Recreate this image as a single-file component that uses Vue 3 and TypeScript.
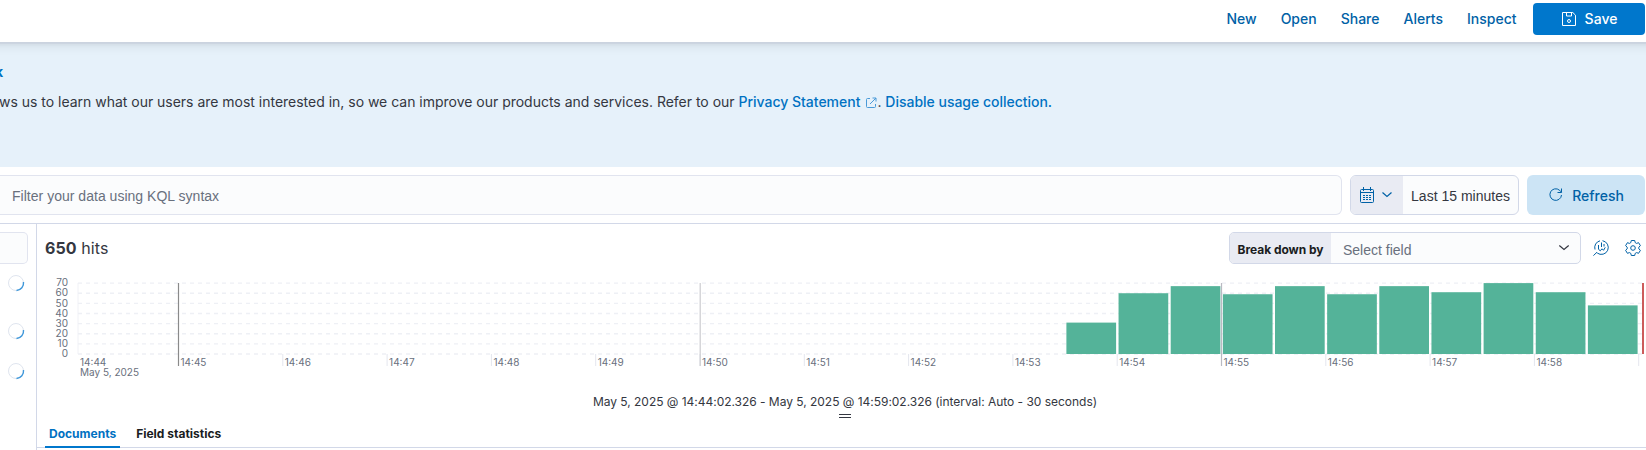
<script setup lang="ts">
const menu = ['New', 'Open', 'Share', 'Alerts', 'Inspect']
const yTicks = [70, 60, 50, 40, 30, 20, 10, 0]
const minuteWidth = 104.3
const firstMinute = 178.5
const minutes = Array.from({ length: 15 }, (_, i) => ({
  x: firstMinute + i * minuteWidth,
  label: i < 14 ? `14:${45 + i}` : '',
}))
const counts = [31, 60, 67, 59, 67, 59, 67, 61, 70, 61, 48]
const baseY = 354
const unit = 70.9 / 70
const yOf = (v: number) => baseY - v * unit
const bars = counts.map((v, i) => ({
  x: 1066.4 + i * 52.15,
  y: yOf(v),
  h: v * unit,
}))
const loaders = ['Selected', 'Available', 'Meta']
</script>

<template>
  <div class="page">
    <header class="header">
      <nav class="menu">
        <a v-for="m in menu" :key="m">{{ m }}</a>
      </nav>
      <button class="save">
        <svg width="16" height="16" viewBox="0 0 16 16" fill="none" stroke="currentColor">
          <path d="M1.500 1.500h10.300l2.700 2.700v10.300h-13zM5.500 1.500v3.500h5v-3.500" />
          <circle cx="8" cy="10" r="1.500" />
        </svg>
        <span>Save</span>
      </button>
    </header>

    <section class="banner">
      <div class="banner-title"><span>k</span></div>
      <p class="banner-text">
        <span>ws us to learn what our users are most interested in, so we can improve our products and services. Refer to our&nbsp;</span>
        <a>Privacy Statement</a>
        <svg class="popout" width="12" height="12" viewBox="0 0 12 12" fill="none" stroke="currentColor">
          <path d="M5 1.500H2.500a1 1 0 0 0-1 1v7a1 1 0 0 0 1 1h7a1 1 0 0 0 1-1V7M7.500 1h3.500v3.500M11 1L5 7" />
        </svg>
        <span>.&nbsp;</span>
        <a>Disable usage collection.</a>
      </p>
    </section>

    <section class="query">
      <div class="kql">Filter your data using KQL syntax</div>
      <div class="dates">
        <div class="quick">
          <svg width="16" height="16" viewBox="0 0 16 16" fill="none" stroke="currentColor">
            <rect x="1.500" y="2.500" width="13" height="13" rx="1" />
            <path d="M1.500 5.500h13M4.500 0v4M11.500 0v4" />
            <path d="M4 8.500h8.500M4 10.500h8.500M4 12.500h8.500" stroke-dasharray="2 1" />
          </svg>
          <svg width="12" height="16" viewBox="0 0 12 16" fill="none" stroke="currentColor" stroke-width="1.200">
            <path d="M1.500 5.500L6 9.500l4.500-4" />
          </svg>
        </div>
        <div class="range">Last 15 minutes</div>
      </div>
      <button class="refresh">
        <svg width="16" height="16" viewBox="0 0 16 16" fill="none" stroke="currentColor">
          <path d="M13.500 8a5.800 5.800 0 1 1-2-4.800l2 2M13.500 1.500v4H9.500" />
        </svg>
        <span>Refresh</span>
      </button>
    </section>

    <main class="body">
      <aside class="sidebar">
        <div class="search"></div>
        <svg v-for="l in loaders" :key="l" class="loader" :class="l.toLowerCase()" width="18" height="18" viewBox="0 0 18 18" fill="none">
          <circle cx="9" cy="9" r="7.500" stroke="#dfe5ef" />
          <path d="M16.500 8a7.500 7.500 0 0 1-7 8.500" stroke="#3f98da" stroke-width="1.400" />
        </svg>
      </aside>

      <div class="content">
        <div class="toolbar">
          <div class="hits"><strong>650</strong> hits</div>
          <div class="breakdown">
            <label>Break down by</label>
            <div class="select">
              <span>Select field</span>
              <svg width="12" height="16" viewBox="0 0 12 16" fill="none" stroke="currentColor" stroke-width="1.200">
                <path d="M1.300 5.500L6 9.500l4.700-4" />
              </svg>
            </div>
          </div>
          <svg class="tool" width="16" height="16" viewBox="0 0 16 16" fill="none" stroke="currentColor">
            <path d="M2 9.500A6.900 6.900 0 0 1 7 .8M9.500 .7A6.900 6.900 0 1 1 4.200 13M.4 15.600l3.600-3.400" />
            <path d="M5.500 5v4.300l1.800 1.500 1.700-2 1.500 1.500 1.800-3M8.500 2.500v4.500M11 4v2.500" />
          </svg>
          <svg class="tool gear" width="16" height="16" viewBox="0 0 16 16" fill="none" stroke="currentColor">
            <path d="M6.300.5h3.400l.5 2.100 1.300.8 2.100-.7 1.800 3-1.600 1.500v1.600l1.600 1.500-1.800 3-2.100-.7-1.300.8-.5 2.100H6.300l-.5-2.100-1.300-.8-2.100.7-1.800-3 1.600-1.500V7.200L.6 5.700l1.800-3 2.100.7 1.300-.8z" stroke-linejoin="round" />
            <circle cx="8" cy="8" r="2.300" />
          </svg>
        </div>

        <svg class="chart" width="1609" height="120" viewBox="37 265 1609 120">
          <line class="axis" x1="78" x2="78" y1="283" y2="354" />
          <line v-for="v in yTicks" :key="v" class="grid" x1="78" x2="1643" :y1="yOf(v)" :y2="yOf(v)" />
          <text v-for="v in yTicks" :key="'l' + v" class="tick-label" text-anchor="end" x="68" :y="yOf(v) + 3.200">{{ v }}</text>
          <line v-for="m in minutes" :key="m.x" class="tick" :x1="m.x" :x2="m.x" y1="354" y2="366" />
          <rect v-for="b in bars" :key="b.x" class="bar" :x="b.x" :y="b.y" width="49.700" :height="b.h" />
          <line class="major dark" x1="178.500" x2="178.500" y1="283" y2="366" />
          <line class="major light" x1="700.200" x2="700.200" y1="283" y2="366" />
          <line class="major" x1="1221.500" x2="1221.500" y1="283" y2="366" />
          <rect class="now" x="1642" y="283" width="2" height="71" />
          <text class="tick-label" x="80" y="366">14:44</text>
          <text class="tick-label" x="80" y="376">May 5, 2025</text>
          <text v-for="m in minutes" :key="m.label" class="tick-label" :x="m.x + 2" y="366">{{ m.label }}</text>
        </svg>

        <div class="interval">May 5, 2025 @ 14:44:02.326 - May 5, 2025 @ 14:59:02.326 (interval: Auto - 30 seconds)</div>
        <div class="handle"></div>
        <div class="tabs">
          <div class="tab active">Documents</div>
          <div class="tab">Field statistics</div>
        </div>
      </div>
    </main>
  </div>
</template>

<style>
body { margin: 0; background: #fff; overflow: hidden; }
</style>

<style scoped>
* { box-sizing: border-box; }
.page { width: 1646px; height: 450px; overflow: hidden; display: flex; flex-direction: column; font-family: Inter, sans-serif; font-size: 14px; color: #343741; background: #fff; }
button { border: 0; font: inherit; font-weight: 500; display: flex; align-items: center; justify-content: center; padding: 0; }
.header { flex: none; height: 43px; margin: 0 -14px; padding: 3px 15px 0 0; display: flex; justify-content: flex-end; align-items: flex-start; background: #fff; border-bottom: 1px solid #cbd3df; box-shadow: 0 1px 0 #ccd5e1, 0 1.900px 4px rgba(0,0,0,.06), 0 4.500px 10px rgba(0,0,0,.05); position: relative; z-index: 1; }
.menu { display: flex; gap: 24px; line-height: 32px; font-weight: 500; color: #0061a6; margin-right: 16.500px; }
.save { width: 112px; height: 32px; border-radius: 4px; background: #0077cc; color: #fff; gap: 8px; }
.save span { margin-top: -1px; }
.banner { flex: none; height: 124px; background: #e6f1fa; overflow: hidden; color: #343741; }
.banner-title { width: 3px; margin-top: 17px; height: 24px; line-height: 24px; display: flex; justify-content: flex-end; font-weight: 700; color: #0071c2; }
.banner-text { margin: 6px 0 0 -1px; line-height: 24px; display: flex; align-items: center; white-space: nowrap; letter-spacing: -.014px; }
.banner-text a { font-weight: 500; color: #0071c2; }
.popout { color: #4a9ad8; margin: 1px 0 0 5px; }
.query { flex: none; height: 57px; padding: 8px 1px 8px 0; display: flex; gap: 8px; border-bottom: 1px solid #d2d8e8; font-family: "Liberation Sans", Arial, sans-serif; }
.kql { flex: 1; height: 40px; line-height: 40px; padding-left: 12px; background: #fbfcfd; border: 1px solid #e1e4ef; border-left: 0; border-radius: 0 6px 6px 0; color: #69707d; letter-spacing: .02px; }
.dates { width: 169px; height: 40px; display: flex; border: 1px solid #d2d8e8; border-radius: 6px; overflow: hidden; background: #fbfcfd; }
.quick { width: 52px; background: #e9ebf3; color: #0061a6; display: flex; align-items: center; gap: 6px; padding-left: 8px; }
.range { flex: 1; line-height: 40px; text-align: center; white-space: nowrap; }
.refresh { width: 118px; height: 40px; border-radius: 6px; background: #cce4f5; color: #0061a6; font-family: Inter, sans-serif; gap: 8px; }
.body { flex: 1; display: flex; min-height: 0; }
.sidebar { width: 37px; border-right: 1px solid #d2d8e8; padding-top: 8px; }
.search { width: 28px; height: 32px; background: #fbfcfd; border: 1px solid #e1e4ef; border-left: 0; border-radius: 0 5px 5px 0; }
.loader { display: block; margin-left: 7px; }
.selected { margin-top: 10px; }
.available { margin-top: 30px; }
.meta { margin-top: 22px; }
.content { flex: 1; display: flex; flex-direction: column; min-width: 0; }
.toolbar { height: 41px; padding: 8px 5px 0 8px; display: flex; align-items: flex-start; }
.hits { flex: 1; font-size: 16px; line-height: 32px; letter-spacing: .08px; }
.breakdown { width: 352px; height: 32px; display: flex; border: 1px solid #d2d8e8; border-radius: 5px; overflow: hidden; background: #fbfcfd; margin-right: 12px; }
.breakdown label { width: 101px; background: #e9ebf3; font-size: 12px; font-weight: 700; color: #1a1c21; line-height: 33px; text-align: center; white-space: nowrap; letter-spacing: -.05px; }
.select { flex: 1; display: flex; align-items: center; justify-content: space-between; padding: 3px 10px 0 12px; font-family: "Liberation Sans", Arial, sans-serif; color: #69707d; }
.select svg { color: #343741; margin-top: -4px; }
.tool { color: #0061a6; margin-top: 8px; }
.gear { margin-left: 16px; }
.chart { flex: none; display: block; }
.grid { stroke: #eef0f5; stroke-width: 1.300; stroke-dasharray: 4 4; }
.axis { stroke: #f0f1f6; }
.tick { stroke: #e4e6ee; }
.major { stroke: #b9bac2; stroke-width: 1.200; }
.dark { stroke: #8a8a8a; }
.light { stroke: #ccccd0; }
.bar { fill: #54b399; }
.now { fill: #cc5b5b; }
.tick-label { font-size: 10px; fill: #69707d; }
.interval { margin-top: 6px; height: 22px; line-height: 21px; font-size: 12px; text-align: center; padding-left: 7px; letter-spacing: -.025px; }
.handle { width: 12px; height: 4px; margin: 1px auto 0; border-top: 1px solid #343741; border-bottom: 1px solid #343741; transform: translateX(3px); }
.tabs { flex: none; margin-top: 9px; height: 21px; display: flex; gap: 12px; padding-left: 8px; font-size: 12px; font-weight: 700; color: #1a1c21; border-bottom: 1px solid #d2d8e8; }
.tab { height: 21px; line-height: 14px; padding: 0 4px; }
.active { color: #0071c2; border-bottom: 2px solid #0077cc; }
</style>
